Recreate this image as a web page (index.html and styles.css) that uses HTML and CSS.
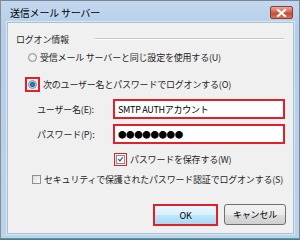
FILE: index.html
```html
<!DOCTYPE html>
<html lang="ja">
<head>
    <meta charset="UTF-8">
    <link rel="stylesheet" href="styles.css">
</head>
<body>
    <div class="window">
        <div class="titlebar">
            <span class="title">送信メール サーバー</span>
            <span class="close">
                <svg width="11" height="8" viewBox="0 0 11 8">
                    <path d="M2 1 L9 7 M9 1 L2 7" stroke="#fff" stroke-width="2.2" stroke-linecap="square"/>
                </svg>
            </span>
        </div>
        <div class="content">
            <div class="group-head">
                <span>ログオン情報</span>
                <span class="rule"></span>
            </div>
            <div class="option first">
                <span class="radio"></span>
                <span>受信メール サーバーと同じ設定を使用する(U)</span>
            </div>
            <div class="option">
                <span class="mark"><span class="radio on"></span></span>
                <span>次のユーザー名とパスワードでログオンする(O)</span>
            </div>
            <div class="field">
                <span class="label">ユーザー名(E):</span>
                <span class="input">SMTP AUTHアカウント</span>
            </div>
            <div class="field">
                <span class="label">パスワード(P):</span>
                <span class="input dots">●●●●●●●●</span>
            </div>
            <div class="option save">
                <span class="mark thin"><span class="check on"></span></span>
                <span>パスワードを保存する(W)</span>
            </div>
            <div class="option secure">
                <span class="check"></span>
                <span>セキュリティで保護されたパスワード認証でログオンする(S)</span>
            </div>
            <div class="buttons">
                <span class="button ok">OK</span>
                <span class="button">キャンセル</span>
            </div>
        </div>
    </div>
    <div class="taskbar"></div>
</body>
</html>
```

FILE: styles.css
```css
body {
    margin: 0;
    background: #2b8c93;
    font-family: "Noto Sans CJK JP", "Noto Sans", sans-serif;
    font-size: 9px;
    letter-spacing: -0.2px;
    color: #1e1e1e;
    white-space: nowrap;
}

.window {
    width: 296px;
    height: 236px;
    border: 1px solid #7a8696;
    border-left-color: #8c8c8c;
    background: linear-gradient(#c3d8ef, #b4cde9 30px, #bcd3ec);
    padding: 0 1px 1px 1px;
    display: flex;
    flex-direction: column;
}

.taskbar {
    height: 2px;
    background: #2b8c93;
}

.titlebar {
    height: 21px;
    display: flex;
    align-items: flex-end;
    justify-content: space-between;
    padding: 0 5px 0 8px;
}

.title {
    font-size: 10px;
    color: #000;
    padding-bottom: 2px;
}

.close {
    width: 21px;
    height: 11px;
    margin-bottom: 3px;
    border: 1px solid #8a3d36;
    border-radius: 2px;
    background: linear-gradient(#e9a99c, #d2614d 50%, #c2442e 51%, #d77760);
    display: flex;
    align-items: center;
    justify-content: center;
}

.content {
    margin: 0 4px 3px 5px;
    flex: 1;
    background: #f0f0f0;
    border: 1px solid #a9bfd6;
    box-shadow: 0 0 0 1px #d9e6f4;
    padding: 8px 0 0 8px;
}

.group-head {
    display: flex;
    align-items: center;
    height: 16px;
    margin-right: 9px;
}

.rule {
    flex: 1;
    margin-left: 26px;
    border-top: 1px solid #c6c6c6;
    border-bottom: 1px solid #fff;
}

.option {
    display: flex;
    align-items: center;
    gap: 3px;
    height: 16px;
    margin-left: 12px;
    margin-top: 11px;
}

.option.first {
    margin-top: 2px;
}

.mark {
    border: 2px solid #e0212b;
    width: 11px;
    height: 11px;
    display: flex;
    align-items: center;
    justify-content: center;
    margin-left: -3px;
}

.mark.thin {
    border-width: 1px;
    width: 11px;
    height: 11px;
    margin-left: -1px;
}

.radio {
    width: 9px;
    height: 9px;
    border: 1px solid #8e8f8f;
    border-radius: 50%;
    background: radial-gradient(#fdfdfd, #d4d4d4);
    box-sizing: border-box;
}

.radio.on {
    background: radial-gradient(#3a8ed6 0, #1c5f9e 2px, #a7c7e6 3px, #eef3f8 4px);
}

.check {
    width: 9px;
    height: 9px;
    border: 1px solid #8e8f8f;
    background: linear-gradient(135deg, #dcdcdc, #fbfbfb);
    box-sizing: border-box;
}

.check.on {
    background: #f4f4f4;
    position: relative;
}

.check.on::after {
    content: "";
    position: absolute;
    left: 2px;
    top: 0;
    width: 2px;
    height: 4px;
    border: solid #2a4a9a;
    border-width: 0 1.5px 1.5px 0;
    transform: rotate(40deg);
}

.field {
    display: flex;
    align-items: center;
    margin-top: 7px;
    margin-left: 21px;
}

.field + .field {
    margin-top: 5px;
}

.label {
    width: 76px;
}

.input {
    width: 165px;
    height: 16px;
    border: 2px solid #e0212b;
    background: #fff;
    display: flex;
    align-items: center;
    padding-left: 3px;
    font-size: 9px;
    letter-spacing: -0.3px;
    color: #000;
}

.dots {
    font-size: 8.5px;
    letter-spacing: -0.4px;
}

.save {
    margin-left: 99px;
    margin-top: 7px;
}

.secure {
    margin-left: 16px;
    margin-top: 4px;
}

.buttons {
    display: flex;
    justify-content: flex-end;
    gap: 6px;
    margin-top: 17px;
    margin-right: 7px;
}

.button {
    width: 60px;
    height: 19px;
    border: 1px solid #707070;
    border-radius: 3px;
    background: linear-gradient(#f2f2f2, #ebebeb 50%, #dddddd 51%, #cfcfcf);
    display: flex;
    align-items: center;
    justify-content: center;
    color: #000;
}

.button.ok {
    border: 2px solid #e0212b;
    border-radius: 0;
    width: 61px;
    height: 18px;
    background: linear-gradient(#eaf6fd, #d9f0fc 50%, #bee6fd 51%, #a7d9f5);
}
```
